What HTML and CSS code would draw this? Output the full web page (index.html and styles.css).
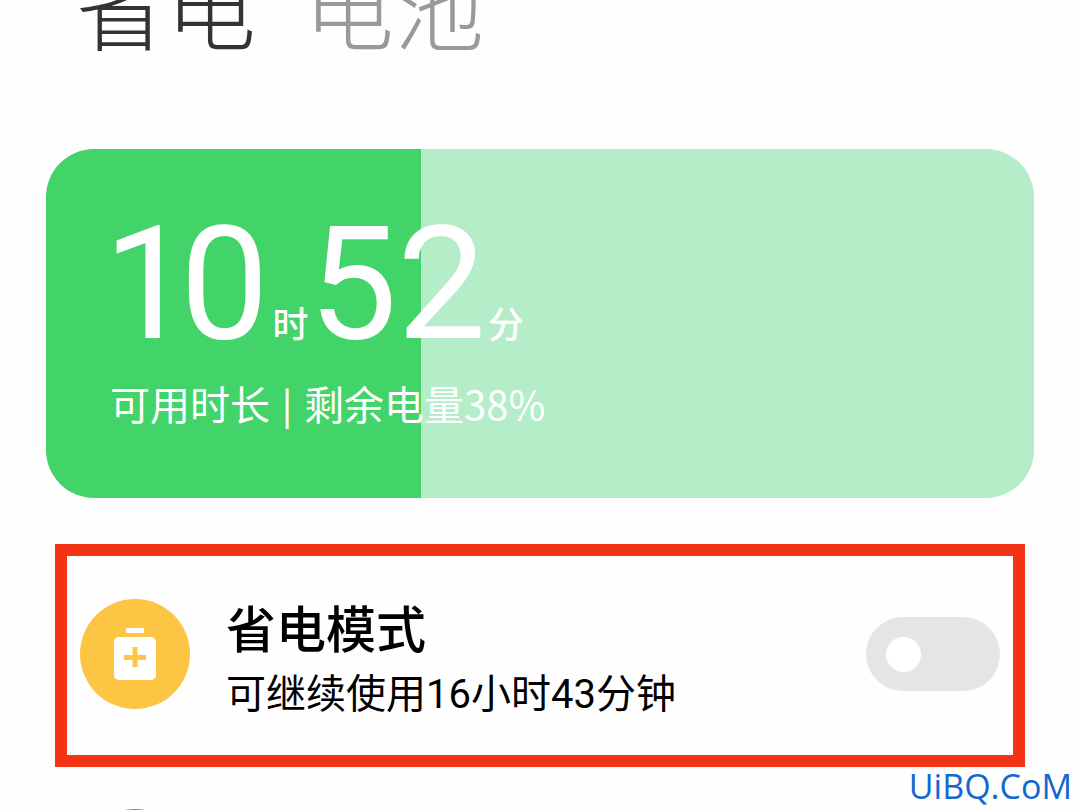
FILE: index.html
```
<!DOCTYPE html>
<html lang="zh-CN">
<head>
  <meta charset="UTF-8">
  <meta name="viewport" content="width=device-width, initial-scale=1">
  <title>省电</title>
  <link rel="stylesheet" href="styles.css">
</head>
<body>
  <nav class="tabs">
    <a class="tab active" href="#saver">省电</a>
    <a class="tab" href="#battery">电池</a>
  </nav>

  <main>
    <section class="battery-card" id="saver">
      <p class="time-left">
        <span class="num">10</span><span class="unit">时</span><span class="num">52</span><span class="unit">分</span>
      </p>
      <p class="battery-info">
        <span>可用时长</span><span class="divider">|</span><span>剩余电量38%</span>
      </p>
    </section>

    <section class="mode-row highlighted">
      <span class="mode-icon">
        <svg viewBox="0 0 110 110" aria-hidden="true">
          <rect x="46" y="29" width="18" height="5" rx="1" fill="#fff"/>
          <rect x="34" y="38" width="42" height="43" rx="5" fill="#fff"/>
          <path d="M55 48v20M44 58.500h22" stroke="#fdc544" stroke-width="5" fill="none"/>
        </svg>
      </span>
      <label class="mode-text" for="powerSave">
        <span class="mode-title">省电模式</span>
        <span class="mode-desc">可继续使用16小时43分钟</span>
      </label>
      <input class="switch" type="checkbox" role="switch" id="powerSave">
    </section>

    <section class="mode-row">
      <span class="mode-icon purple"></span>
    </section>
  </main>

  <div class="watermark">UiBQ.CoM</div>
</body>
</html>
```
FILE: styles.css
```
* {
  box-sizing: border-box;
}
body {
  position: relative;
  height: 100vh;
  margin: 0;
  overflow: hidden;
  background-color: #fefefe;
  color: #000;
  font-family: Roboto, "Noto Sans CJK SC", sans-serif;
}
p {
  margin: 0;
}

/* Tabs */
.tabs {
  display: flex;
  gap: 48px;
  margin-top: -40px;
  padding: 0 76px;
  line-height: 108px;
}
.tab {
  color: #999;
  font-size: 90px;
  font-weight: 300;
  text-decoration: none;
}
.tab.active {
  color: #333;
}

/* Battery card */
.battery-card {
  margin: 81px 46px 46px;
  padding: 57px 64px 69px;
  border-radius: 48px;
  background: linear-gradient(to right, #42d369 38%, #b4edc7 38%);
  color: #fff;
}
.time-left {
  display: flex;
  align-items: baseline;
}
.num {
  font-size: 158px;
  font-variant-numeric: proportional-nums;
  line-height: 156px;
}
.unit {
  margin-left: 2px;
  font-size: 36px;
  font-weight: 500;
  line-height: 40px;
}
.battery-info {
  display: flex;
  gap: 12px;
  margin-top: 15px;
  font-family: "Noto Sans CJK SC", sans-serif;
  font-size: 40px;
  line-height: 52px;
}
.divider {
  font-size: 36px;
  font-weight: 500;
}

/* Mode rows */
.mode-row {
  display: flex;
  align-items: center;
  margin: 0 55px 30px;
  padding: 12px 25px;
}
.mode-row.highlighted {
  padding: 33px 13px 36px;
  border: 12px solid #f33414;
}
.mode-icon {
  flex: none;
  width: 110px;
  height: 110px;
  border-radius: 50%;
  background-color: #fdc544;
}
.mode-icon.purple {
  background-color: #7b74cf;
}
.mode-icon svg {
  display: block;
}
.mode-text {
  flex: 1;
  margin-left: 36px;
  padding-top: 12px;
}
.mode-title,
.mode-desc {
  display: block;
}
.mode-title {
  font-size: 50px;
  font-weight: 500;
  line-height: 60px;
}
.mode-desc {
  margin-top: 10px;
  font-size: 40px;
  line-height: 48px;
}
.switch {
  display: flex;
  flex: none;
  align-items: center;
  width: 134px;
  height: 74px;
  margin: 0;
  padding: 0 20px;
  border-radius: 37px;
  background-color: #e5e5e5;
  appearance: none;
  cursor: pointer;
}
.switch::before {
  width: 35px;
  height: 35px;
  border-radius: 50%;
  background-color: #fff;
  content: "";
}
.switch:checked {
  justify-content: flex-end;
  background-color: #42d369;
}

.watermark {
  position: absolute;
  right: 8px;
  bottom: 2px;
  color: #1268d0;
  font-family: "Open Sans", sans-serif;
  font-size: 34px;
  font-weight: 500;
  line-height: 44px;
}
```
